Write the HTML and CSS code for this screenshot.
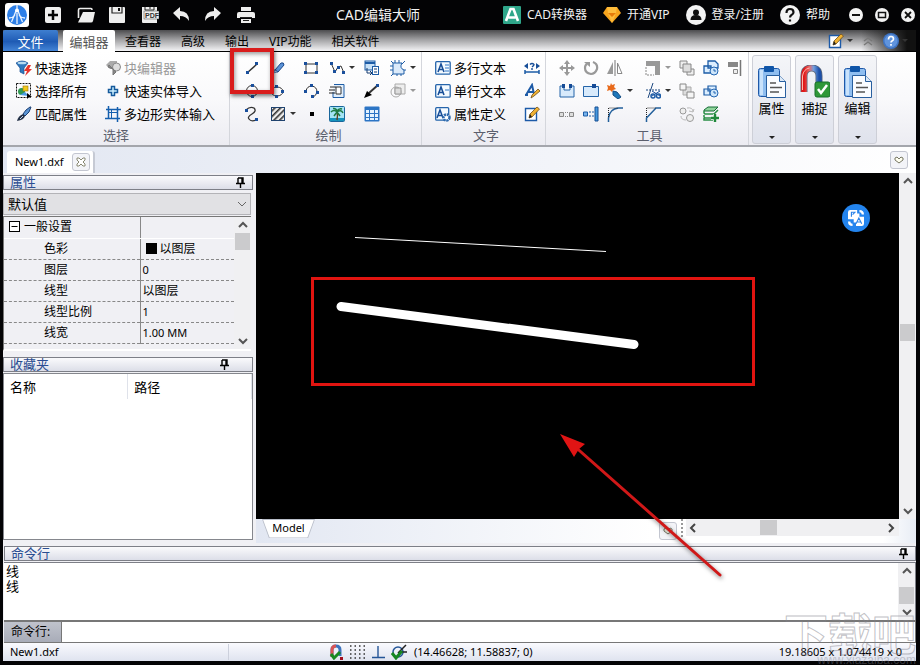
FILE: index.html
```html
<!DOCTYPE html>
<html lang="zh-CN">
<head>
<meta charset="utf-8">
<title>CAD编辑大师</title>
<link rel="stylesheet" href="styles.css">
</head>
<body>
<svg class="defs" aria-hidden="true">
  <defs>
    <linearGradient id="magnet" x1="0" x2="1"><stop offset="0" stop-color="#e01818"/><stop offset=".35" stop-color="#e86a6a"/><stop offset=".65" stop-color="#6f9fe0"/><stop offset="1" stop-color="#1d50a8"/></linearGradient>
    <pattern id="hatch" width="4" height="4" patternUnits="userSpaceOnUse" patternTransform="rotate(45)"><rect width="4" height="4" fill="#eee"/><rect width="1.6" height="4" fill="#333"/></pattern>
  </defs>
  <symbol id="pin" viewBox="0 0 9 11"><path d="M2 1h5v5M2 1v5M6 1v5M0 6.500h9M4.500 7v4" fill="none" stroke="#000" stroke-width="1.400"/></symbol>
  <symbol id="up" viewBox="0 0 10 8"><path d="M1 6l4-4 4 4" fill="none" stroke="#555" stroke-width="2"/></symbol>
  <symbol id="down" viewBox="0 0 10 8"><path d="M1 2l4 4 4-4" fill="none" stroke="#555" stroke-width="2"/></symbol>
  <symbol id="left" viewBox="0 0 8 10"><path d="M6 1L2 5l4 4" fill="none" stroke="#444" stroke-width="2"/></symbol>
  <symbol id="right" viewBox="0 0 8 10"><path d="M2 1l4 4-4 4" fill="none" stroke="#444" stroke-width="2"/></symbol>
  <symbol id="heart" viewBox="0 0 10 8"><path d="M1 2l2-1 2 2 2-2 2 1v2L5 7 1 4z" fill="#fffff0" stroke="#777764"/></symbol>
  <symbol id="clip" viewBox="0 0 30 34">
    <rect x="1.500" y="3.500" width="21" height="28" rx="2" fill="#8fbef0" stroke="#1e58a8"/>
    <rect x="3" y="5" width="3" height="25" fill="#c9e2fb"/>
    <rect x="7" y="1" width="10" height="6" rx="1" fill="#0f55a8"/>
    <path d="M9.500 10.500h13l6 6v16h-19z" fill="#fafcff" stroke="#285f9f"/>
    <path d="M22.500 10.500v6h6" fill="#dce9f7" stroke="#285f9f"/>
    <path d="M13 18h6M13 22.500h12M13 27h9" stroke="#555" stroke-width="1.500"/>
  </symbol>
  <symbol id="noteEdit" viewBox="0 0 16 16"><path d="M1.500 2.500h11v12h-11z" fill="#fff" stroke="#1c5aa8" stroke-width="1.400"/><path d="M5 12l1-4 7-7 2.500 2L8 11z" fill="#f0b234" stroke="#71501b" stroke-width=".8"/><path d="M5 12l3-1-2-3z" fill="#222"/></symbol>
</svg>

<header class="titlebar">
  <div class="quick">
    <svg class="logo" viewBox="0 0 24 24"><rect width="24" height="24" rx="3" fill="#fff"/><circle cx="12" cy="12" r="10" fill="#2d7fe8"/><path d="M12 2v4M12 10v11M6.500 19L11 8h2l4.500 11M4 15q4 0 6-3M20 15q-4 0-6-3" stroke="#e8f2ff" stroke-width="1.300" fill="none"/><circle cx="12" cy="7.500" r="2" fill="#fff"/></svg>
    <button aria-label="新建"><svg viewBox="0 0 16 16"><rect width="16" height="16" rx="2" fill="#f0f0f0"/><path d="M8 3v10M3 8h10" stroke="#050505" stroke-width="2.500"/></svg></button>
    <button aria-label="打开"><svg class="w18" viewBox="0 0 18 16"><path d="M1.500 11V3q0-1.500 1.500-1.500h11q1 0 1 1.500" fill="none" stroke="#eee" stroke-width="1.600"/><path d="M6 5h12l-2 9q-.4 1.500-2 1.500H1z" fill="#eee"/></svg></button>
    <button aria-label="保存"><svg viewBox="0 0 16 16"><path d="M1 0h14q1 0 1 1v14q0 1-1 1H1q-1 0-1-1V1q0-1 1-1z" fill="#eee"/><path d="M3 0v6h10V0" fill="none" stroke="#222" stroke-width="1.200"/><path d="M10 1v3" stroke="#111" stroke-width="2"/></svg></button>
    <button aria-label="保存为PDF"><svg class="w18" viewBox="0 0 18 16"><path d="M1 0h15v16H2q-1 0-1-1z" fill="#eee"/><path d="M4 0v3h9V0M9 0v2" stroke="#222" fill="none"/><rect x="3" y="4" width="15" height="8" fill="#eee" stroke="#444" stroke-width=".5"/><text x="4" y="11" font-size="7" font-weight="700" font-family="Liberation Sans, sans-serif" fill="#333">PDF</text></svg></button>
    <button aria-label="撤销"><svg viewBox="0 0 16 16"><path d="M0 6l7-6v4q9 0 9 10-3-5-9-5v4z" fill="#eee"/></svg></button>
    <button aria-label="重做"><svg viewBox="0 0 16 16"><path d="M16 6L9 0v4Q0 4 0 14q3-5 9-5v4z" fill="#eee"/></svg></button>
    <button aria-label="打印"><svg class="w18" viewBox="0 0 18 16"><path d="M4 0h10v4H4zM2 5h14q2 0 2 2v4H0V7q0-2 2-2zM4 12h10v4H4z" fill="#eee"/><path d="M3 10.500h12M6 13.500h6" stroke="#222" fill="none"/></svg></button>
  </div>
  <h1>CAD编辑大师</h1>
  <nav class="account">
    <a href="#"><svg viewBox="0 0 18 18"><rect width="18" height="18" rx="1" fill="#2fa68a"/><path d="M3 15L7.500 3h3L15 15M5.500 11.500h7" stroke="#fff" stroke-width="2.600" fill="none"/></svg>CAD转换器</a>
    <a href="#"><svg viewBox="0 0 18 18"><path d="M4 1h10l4 6-9 10L0 7z" fill="#f8a51d"/><path d="M4 1l1 6h8l1-6M5 7l4 10 4-10" fill="#ffbd3c"/><path d="M5 7h8l-4 4z" fill="#e77b0a"/></svg>开通VIP</a>
    <a href="#"><svg class="w20" viewBox="0 0 20 20"><circle cx="10" cy="10" r="10" fill="#f3f3f3"/><circle cx="10" cy="7.500" r="3" fill="#111"/><path d="M4.500 15q0-5 5.500-5t5.500 5z" fill="#111"/></svg>登录/注册</a>
    <a href="#"><svg class="w20" viewBox="0 0 20 20"><circle cx="10" cy="10" r="10" fill="#f3f3f3"/><path d="M6.500 8q0-4 3.500-4t3.500 3.200q0 1.800-2 2.800-1.500.8-1.500 2.500M10 14.500v2" fill="none" stroke="#111" stroke-width="2.200"/></svg>帮助</a>
  </nav>
  <div class="winbtns">
    <button aria-label="最小化"><svg viewBox="0 0 14 14"><circle cx="7" cy="7" r="7" fill="#f3f3f3"/><path d="M3 7h8" stroke="#111" stroke-width="2"/></svg></button>
    <button aria-label="最大化"><svg viewBox="0 0 14 14"><circle cx="7" cy="7" r="7" fill="#f3f3f3"/><rect x="3.500" y="4.500" width="7" height="5" fill="none" stroke="#111" stroke-width="1.500"/></svg></button>
    <button aria-label="关闭"><svg viewBox="0 0 14 14"><circle cx="7" cy="7" r="7" fill="#f3f3f3"/><path d="M4 4l6 6M10 4l-6 6" stroke="#111" stroke-width="1.800"/></svg></button>
  </div>
</header>

<div class="window">
  <nav class="tabs">
    <button class="file">文件</button>
    <button class="active">编辑器</button>
    <button>查看器</button>
    <button>高级</button>
    <button>输出</button>
    <button>VIP功能</button>
    <button>相关软件</button>
    <div class="tabtools">
      <button class="drop" aria-label="样式"><svg viewBox="0 0 16 16"><use href="#noteEdit"/></svg></button>
      <button aria-label="折叠"><svg class="s10" viewBox="0 0 10 10"><path d="M1 5l4-3 4 3M1 9l4-3 4 3" fill="none" stroke="#777" stroke-width="1.400"/></svg></button>
      <button class="drop" aria-label="帮助"><svg viewBox="0 0 16 16"><circle cx="8" cy="8" r="8" fill="#3e74c4"/><circle cx="8" cy="8" r="6.500" fill="#6094dd"/><path d="M5.500 6.500q0-3 2.500-3t2.500 2.400q0 1.300-1.500 2-1 .6-1 1.600M8 11v1.800" fill="none" stroke="#fff" stroke-width="1.700"/></svg></button>
    </div>
  </nav>

  <div class="ribbon">
    <section class="group select-group">
      <div class="tools">
        <button><svg viewBox="0 0 16 16"><path d="M0 3q6-4 12 0L8 8v6l-4-2V8z" fill="#2f78be" stroke="#174e91" stroke-width=".7"/><ellipse cx="6" cy="3" rx="4.500" ry="1.300" fill="#b6daf2"/><path d="M12 5l-4 6h3l-2 5 7-7h-3l2-4z" fill="#e5322c"/></svg>快速选择</button>
        <button disabled><svg viewBox="0 0 16 16"><path d="M1 5l4-4h7v8H5z" fill="#aaa"/><circle cx="11.500" cy="7" r="4" fill="#ddd" stroke="#888"/><path d="M4 5l7 7-3 3V9L3 7z" fill="#888" stroke="#777"/></svg>块编辑器</button>
        <button><svg viewBox="0 0 16 16"><rect x=".5" y=".5" width="14" height="14" fill="none" stroke="#111" stroke-dasharray="2 1"/><circle cx="5.500" cy="8.500" r="3.500" fill="#2f9850"/><rect x="7" y="3" width="5" height="5" fill="#f2c81d" stroke="#987600" stroke-width=".6"/><path d="M4 12l5-3 4 4z" fill="#4b9be4"/><path d="M11 10v6l2-2h3z"/></svg>选择所有</button>
        <button><svg viewBox="0 0 16 16"><path d="M6.500 3.500h3v3h3v3h-3v3h-3v-3h-3v-3h3z" fill="#cdf1ff" stroke="#155a9c" stroke-width="1.500"/></svg>快速实体导入</button>
        <button><svg viewBox="0 0 16 16"><path d="M14 1l-4 3-3 4 2 2 4-4 2-5z" fill="#5b94d4" stroke="#1b3e72"/><path d="M7 8l2 2q-1 4-8 5 1-5 6-7z" fill="#233047"/><path d="M7 10l-3 3" stroke="#c4d3e8"/></svg>匹配属性</button>
        <button><svg viewBox="0 0 16 16"><path d="M3.500 0v13M12.500 1v15M1 3.500h15M0 12.500h15" stroke="#155fae" stroke-width="1.500"/><path d="M6.500 3v10M3 6.500h10" stroke="#155fae"/></svg>多边形实体输入</button>
      </div>
      <h2>选择</h2>
    </section>

    <section class="group draw-group">
      <div class="tools">
        <button class="marked" aria-label="线"><svg viewBox="0 0 16 16"><path d="M3 13L13 4" stroke="#333" stroke-width="1.500"/><path d="M2 11h3v3H2zM11 2h3v3h-3z" fill="#1a4f9c"/></svg></button>
        <button aria-label="铅笔"><svg viewBox="0 0 16 16"><path d="M0 10h5" stroke="#555"/><path d="M5 10l6-7q3-1 3 2l-6 7z" fill="#5c94d8" stroke="#1c498b"/><path d="M3 13l2-3 3 2z" fill="#a5c6ec" stroke="#1c498b" stroke-width=".6"/></svg></button>
        <button aria-label="矩形"><svg viewBox="0 0 16 16"><rect x="3" y="4" width="11" height="9" fill="none" stroke="#333"/><path d="M1 2h3v3H1zM12 2h3v3h-3zM1 11h3v3H1zM12 11h3v3h-3z" fill="#1a4f9c"/></svg></button>
        <button class="drop" aria-label="多段线"><svg viewBox="0 0 16 16"><path d="M2 3l4 9 3-5 3-1 3 7" fill="none" stroke="#333"/><path d="M1 2h3v3H1zM4 10h3v3H4zM8 6h3v3H8zM13 11h3v3h-3z" fill="#1a4f9c"/></svg></button>
        <button aria-label="插入块"><svg viewBox="0 0 16 16"><rect x="1" y="1" width="10" height="9" fill="#c8e1f7" stroke="#1d5ca6"/><path d="M1 3h10" stroke="#1d5ca6" stroke-width="2"/><rect x="8.500" y="6.500" width="6" height="8" fill="#fff" stroke="#1d5ca6"/><path d="M10 9h3M10 12h3M3 8v5h5M6 11l2 2-2 2" fill="none" stroke="#173d70"/></svg></button>
        <button class="drop" aria-label="云线"><svg viewBox="0 0 16 16"><path d="M3 3h9q-3 5 2 7v4H3z" fill="#dbeafa" stroke="#1d5ca6"/><path d="M1 1l2 2M5 0v3M9 0v3M15 1l-3 3M0 6h3M0 10h3M1 16l2-2M7 14v2M11 14v2M14 10h2" stroke="#1d5ca6"/></svg></button>

        <button aria-label="圆"><svg viewBox="0 0 16 16"><circle cx="8" cy="8" r="5.500" fill="none" stroke="#333"/><path d="M7 1h3v3H7zM1 7h3v3H1zM12 7h3v3h-3zM7 12h3v3H7zM7 7h2v2H7z" fill="#1a4f9c"/></svg></button>
        <button aria-label="椭圆"><svg viewBox="0 0 16 16"><ellipse cx="7" cy="8.500" rx="6" ry="4.500" fill="none" stroke="#333"/><path d="M5 2h3v3H5zM11 7h3v3h-3zM5 12h3v3H5z" fill="#1a4f9c"/></svg></button>
        <button aria-label="圆弧"><svg viewBox="0 0 16 16"><path d="M3 8q1-5 6-5 5 1 5 6-1 4-4 5" fill="none" stroke="#333"/><path d="M1 7h3v3H1zM7 1h3v3H7zM13 8h3v3h-3zM8 12h3v3H8z" fill="#1a4f9c"/></svg></button>
        <button aria-label="外部参照"><svg viewBox="0 0 16 16"><path d="M5 1.500h10v13H4V9" fill="#e1eefb" stroke="#1d5ca6"/><path d="M7 4h5v7H7z" fill="#fff" stroke="#333"/><path d="M1 4h6M0 7h6M0 10h6" stroke="#222"/></svg></button>
        <button aria-label="引线"><svg viewBox="0 0 16 16"><path d="M14 2L5 10" stroke="#333" stroke-width="2"/><path d="M0 15l3-7 5 4z"/><path d="M12 1h3v3h-3z" fill="#1a4f9c"/></svg></button>
        <button class="drop" disabled aria-label="区域"><svg viewBox="0 0 16 16"><path d="M5 1h10v10H5z" fill="#eee" stroke="#aaa"/><circle cx="6" cy="9" r="5" fill="none" stroke="#aaa"/><path d="M5 5h6v6H5z" fill="#ddd" stroke="#999"/></svg></button>

        <button aria-label="样条线"><svg viewBox="0 0 16 16"><path d="M2 4q4-4 8-2 3 3-2 6-5 3-3 5 2 3 7 1" fill="none" stroke="#333" stroke-width="1.300"/><path d="M1 3h3v3H1zM11 12h3v3h-3z" fill="#1a4f9c"/></svg></button>
        <button class="drop" aria-label="填充"><svg viewBox="0 0 16 16"><rect x="1.500" y="1.500" width="13" height="13" fill="url(#hatch)" stroke="#1f426e"/></svg></button>
        <button aria-label="点"><svg viewBox="0 0 16 16"><path d="M7 6h4v4H7z"/></svg></button>
        <button aria-label="图像"><svg viewBox="0 0 16 16"><rect x=".5" y=".5" width="15" height="15" rx="1" fill="#a5e4f5" stroke="#19669b"/><path d="M1 12h14v3H1z" fill="#1693bd"/><path d="M8 14q1-5 0-8" stroke="#604020" stroke-width="1.500" fill="none"/><path d="M8 6Q5 3 2 6M8 6q4-3 6 1M8 5Q7 2 4 2.500M8 5q2-3 5-2M8 6L5 10M8 6l3 4" fill="none" stroke="#1e7942" stroke-width="1.500"/></svg></button>
        <button aria-label="表格"><svg viewBox="0 0 16 16"><rect x=".5" y=".5" width="15" height="15" rx="1" fill="#2c75c5"/><path d="M2 4h3v3H2zM6 4h4v3H6zM11 4h3v3h-3zM2 8h3v3H2zM6 8h4v3H6zM11 8h3v3h-3zM2 12h3v2H2zM6 12h4v2H6zM11 12h3v2h-3z" fill="#e4f3ff"/></svg></button>
      </div>
      <h2>绘制</h2>
    </section>

    <section class="group text-group">
      <div class="tools">
        <button><svg viewBox="0 0 16 16"><rect x=".7" y="1.700" width="14.500" height="12.500" rx="1" fill="#f4faff" stroke="#2564ab" stroke-width="1.300"/><path d="M3 12L6 4l3 8M4 9.500h4" fill="none" stroke="#174e98" stroke-width="1.600"/><path d="M10 5h4M10 8h4M10 11h4" stroke="#2c74c5"/></svg>多行文本</button>
        <button aria-label="标注"><svg viewBox="0 0 16 16"><path d="M1 10v4M15 10v4M1 12h14" stroke="#1d5ca6" stroke-width="1.500"/><path d="M0 6l4-3v6zM16 6l-4-3v6z" fill="#174e98"/><path d="M6 4.500q2-2 4 0 0 1-2 2.500M8 8v2" fill="none" stroke="#174e98" stroke-width="1.400"/></svg></button>
        <button><svg viewBox="0 0 16 16"><rect x=".7" y="1.700" width="14.500" height="12.500" rx="1" fill="#f4faff" stroke="#2564ab" stroke-width="1.300"/><path d="M3 12L6 4l3 8M4 9.500h4" fill="none" stroke="#174e98" stroke-width="1.600"/><path d="M10 7h4" stroke="#2c74c5"/></svg>单行文本</button>
        <button aria-label="文字样式"><svg viewBox="0 0 16 16"><path d="M1 12h3M2 12L8 2l2 9M4 9h5" fill="none" stroke="#1e5ba7" stroke-width="2"/><path d="M7 15l1-3 6-6 2 2-6 5z" fill="#f0b234" stroke="#71501b" stroke-width=".8"/></svg></button>
        <button><svg viewBox="0 0 16 16"><rect x=".7" y="1.700" width="13" height="12.500" rx="1" fill="#f4faff" stroke="#2564ab" stroke-width="1.300"/><path d="M2 12L5 4l3 8M3 9.500h4" fill="none" stroke="#174e98" stroke-width="1.500"/><circle cx="11.500" cy="11.500" r="3" fill="#fff" stroke="#2c69ae" stroke-width="2.500" stroke-dasharray="2 .8"/></svg>属性定义</button>
        <button aria-label="编辑文字"><svg viewBox="0 0 16 16"><use href="#noteEdit"/></svg></button>
      </div>
      <h2>文字</h2>
    </section>

    <section class="group tool-group">
      <div class="tools">
        <button disabled aria-label="移动"><svg viewBox="0 0 16 16"><path d="M8 2v12M2 8h12" stroke="#999" stroke-width="2"/><path d="M8 0l3 4H5zM8 16l3-4H5zM0 8l4-3v6zM16 8l-4-3v6z" fill="#999"/></svg></button>
        <button disabled aria-label="旋转"><svg viewBox="0 0 16 16"><path d="M10 2q5 2 4 7-2 5-6 5-6-1-6-6 0-3 2-4" fill="none" stroke="#999" stroke-width="2.200"/><path d="M1 2h6v5z" fill="#999"/></svg></button>
        <button disabled aria-label="镜像"><svg viewBox="0 0 16 16"><path d="M6 2v12H0z" fill="#999"/><path d="M8 0v16" stroke="#777"/><path d="M10.500 3v10.500H15z" fill="#fff" stroke="#888"/></svg></button>
        <button disabled class="drop" aria-label="缩放"><svg viewBox="0 0 16 16"><path d="M1 1h14v14h-5V6H1z" fill="#999"/><path d="M1 7v8h8" fill="none" stroke="#888" stroke-dasharray="2 1"/></svg></button>
        <button disabled aria-label="前置"><svg viewBox="0 0 16 16"><path d="M1 1h7v7H1zM8 9h7v6H8z" fill="#eee" stroke="#888"/><path d="M4 4h8v8H4z" fill="#ddd" stroke="#888"/></svg></button>
        <button aria-label="组合"><svg viewBox="0 0 16 16"><path d="M5 1h7l3 3v4H5zM1 6h7v7H1z" fill="#dceeff" stroke="#1d5ca6" stroke-width="1.300"/><circle cx="11" cy="11" r="4" fill="#cde5fa" stroke="#2466b2"/><path d="M11 9v2h2" stroke="#2466b2" fill="none"/></svg></button>
        <button disabled aria-label="对齐"><svg viewBox="0 0 16 16"><path d="M1 2h10v5H1z" fill="#888"/><path d="M6.500 9.500h4v4h-4z" fill="#eee" stroke="#888"/><path d="M13.500 0v16" stroke="#777" stroke-width="1.500"/></svg></button>

        <button aria-label="打断"><svg viewBox="0 0 16 16"><path d="M1 3h4v4h6V3h4v11H1z" fill="#d8eafb" stroke="#2564a8"/><path d="M3 1h3v4H3zM10 1h3v4h-3z" fill="#164b96"/></svg></button>
        <button aria-label="闭合"><svg viewBox="0 0 16 16"><path d="M.5 3.500h15v10H.5z" fill="#d8eafb" stroke="#2564a8"/><path d="M9 1h4v4H9z" fill="#164b96"/></svg></button>
        <button class="drop" aria-label="分解"><svg viewBox="0 0 16 16"><path d="M4 0l1 2 3-1-1 3 2 2-3 1-1 2-2-2-3 1 1-3-1-3 3 1z" fill="#e86a1b"/><path d="M6 8l4 1 4 5-3 2-5-4z" fill="#1e77b9" stroke="#154c83"/></svg></button>
        <button class="drop" aria-label="修剪"><svg viewBox="0 0 16 16"><path d="M8 0L3 15" stroke="#1b477f"/><path d="M1 7h14" stroke="#1b477f" stroke-dasharray="2 1"/><path d="M7 8l8 5M7 13l8-5" stroke="#174f9c"/><circle cx="8" cy="13" r="2" fill="none" stroke="#1d5ca6" stroke-width="1.500"/><circle cx="13.500" cy="13" r="2" fill="none" stroke="#1d5ca6" stroke-width="1.500"/></svg></button>
        <button disabled aria-label="后置"><svg viewBox="0 0 16 16"><path d="M4 4h8v8H4z" fill="#ddd" stroke="#aaa"/><path d="M1 1h6v6H1zM8 9h7v6H8z" fill="#f5f5f5" stroke="#888"/></svg></button>
        <button aria-label="取消组合"><svg viewBox="0 0 16 16"><path d="M5 3h8v5H5zM1 6h6v6H1z" fill="#dceeff" stroke="#1d5ca6" stroke-width="1.200"/><circle cx="11" cy="10" r="4" fill="#cde5fa" stroke="#2466b2"/><path d="M11 8v2h2" stroke="#2466b2" fill="none"/></svg></button>
        <span></span>

        <button disabled aria-label="阵列"><svg viewBox="0 0 16 16"><path d="M.5 6.500h4v4h-4zM10.500 6.500h4v4h-4z" fill="#ddd" stroke="#888"/><path d="M6 6.500h4M6 10.500h4" stroke="#888" stroke-dasharray="1 1"/></svg></button>
        <button aria-label="延伸"><svg viewBox="0 0 16 16"><path d="M.5 6h4v4h-4z" fill="#77b3ed" stroke="#1d5ca6"/><path d="M6 6h5M6 10h5" stroke="#1d5ca6" stroke-dasharray="2 1"/><path d="M12 1h3v14h-3z" fill="#4598df" stroke="#174f93"/></svg></button>
        <button aria-label="圆角"><svg viewBox="0 0 16 16"><path d="M1.500 16v-4q1-9 10-10H16" fill="none" stroke="#225f9b" stroke-width="1.500"/><path d="M1.500 11V2H11" fill="none" stroke="#222" stroke-dasharray="1 1"/></svg></button>
        <button aria-label="倒角"><svg viewBox="0 0 16 16"><path d="M1.500 16v-4L11 2h5" fill="none" stroke="#225f9b" stroke-width="1.500"/><path d="M1.500 11V2H11" fill="none" stroke="#222" stroke-dasharray="1 1"/></svg></button>
        <button disabled aria-label="替换"><svg viewBox="0 0 16 16"><circle cx="4" cy="5" r="3" fill="#eee" stroke="#999"/><circle cx="11" cy="12" r="3.500" fill="#eee" stroke="#999"/><path d="M8 2q6-1 6 4M10 5l4 1 1-3M2 10q0 4 5 4" fill="none" stroke="#bbb"/></svg></button>
        <button aria-label="添加图层"><svg viewBox="0 0 16 16"><path d="M1 4l4-3h10l-4 4H1z" fill="#8fd49b" stroke="#176c37"/><path d="M1 5v2l1 1h9l4-4M1 9v2l1 1h9M1 12v2h10" fill="none" stroke="#2b8e47" stroke-width="1.500"/><path d="M12 8v8M8 12h8" stroke="#fff" stroke-width="4"/><path d="M12 8v8M8 12h8" stroke="#20883c" stroke-width="2.500"/></svg></button>
      </div>
      <h2>工具</h2>
    </section>

    <div class="large">
      <button><svg viewBox="0 0 30 34"><use href="#clip"/></svg>属性</button>
      <button><svg viewBox="0 0 30 34"><path d="M4 27V11q0-8 7.500-8T19 11v8" fill="none" stroke="#5b6679" stroke-width="7"/><path d="M4 27V11q0-8 7.500-8T19 11v8" fill="none" stroke="url(#magnet)" stroke-width="5.500"/><path d="M2.500 25V11q1-7 7-8" fill="none" stroke="#ffb8ac" stroke-width="1"/><rect x="15" y="17" width="15" height="15" rx="2" fill="#2f9838" stroke="#16702a"/><path d="M18 24l3 4 6-8" fill="none" stroke="#fff" stroke-width="2.500"/></svg>捕捉</button>
      <button><svg viewBox="0 0 30 34"><use href="#clip"/></svg>编辑</button>
    </div>
  </div>

  <div class="doctabs">
    <div class="doctab">New1.dxf<button class="chip" aria-label="关闭文件"><svg class="s10" viewBox="0 0 10 10"><path d="M1 1h2l2 2 2-2h2v2L7 5l2 2v2H7L5 7 3 9H1V7l2-2-2-2z" fill="#fff" stroke="#888872"/></svg></button></div>
    <button class="chip" aria-label="文件列表"><svg class="s10" viewBox="0 0 10 8"><use href="#heart"/></svg></button>
  </div>

  <main class="work">
    <aside class="side">
      <h3 class="panelhead">属性<svg viewBox="0 0 9 11"><use href="#pin"/></svg></h3>
      <div class="selectwrap">
        <select aria-label="对象"><option>默认值</option></select>
        <svg viewBox="0 0 10 8"><path d="M1 2l4 4 4-4" fill="none" stroke="#666"/></svg>
      </div>
      <div class="props">
        <table>
          <tbody>
            <tr class="cat"><th><svg viewBox="0 0 11 11"><rect x=".5" y=".5" width="10" height="10" fill="#fff" stroke="#000"/><path d="M2.500 5.500h6" stroke="#000"/></svg>一般设置</th><td></td></tr>
            <tr><th>色彩</th><td class="color"><i></i>以图层</td></tr>
            <tr><th>图层</th><td>0</td></tr>
            <tr><th>线型</th><td>以图层</td></tr>
            <tr><th>线型比例</th><td>1</td></tr>
            <tr><th>线宽</th><td>1.00 MM</td></tr>
          </tbody>
        </table>
        <div class="vscroll"><svg viewBox="0 0 10 8"><use href="#up"/></svg><i></i><b></b><svg viewBox="0 0 10 8"><use href="#down"/></svg></div>
      </div>
      <h3 class="panelhead fav">收藏夹<svg viewBox="0 0 9 11"><use href="#pin"/></svg></h3>
      <div class="favlist">
        <table><thead><tr><th>名称</th><th>路径</th></tr></thead></table>
      </div>
    </aside>

    <div class="view">
      <div class="canvas">
        <svg class="drawing" width="643" height="346" viewBox="0 0 643 346">
          <path d="M99 64.500L350 78.500" stroke="#fff"/>
          <path d="M85 133.500L378 171.500" stroke="#fff" stroke-width="9" stroke-linecap="round"/>
          <rect x="56.500" y="105.500" width="441" height="106" fill="none" stroke="#e01410" stroke-width="3"/>
          <g class="arrow"><path d="M316 271L464 402" stroke="#d01818" stroke-width="3" stroke-linecap="round"/><path d="M304 261l25 10-6 5-5 8z" fill="#e01414"/></g>
        </svg>
        <button class="translate" aria-label="翻译"><svg viewBox="0 0 14 14"><path d="M2 0h6v3h2v3h4v6q0 2-2 2H7v-3H5V8H0V2q0-2 2-2zM10 0q4 0 4 4h-2q0-2-2-2zM0 10q0 4 4 4v-2q-2 0-2-2z" fill="#fff"/><path d="M3 6V2h3L4 4M7 12l2.500-5L12 12M8 10.500h3" stroke="#2c83e8" fill="none"/></svg></button>
      </div>
      <div class="vscroll right"><svg viewBox="0 0 10 8"><use href="#up"/></svg><b></b><i></i><b class="more"></b><svg viewBox="0 0 10 8"><use href="#down"/></svg></div>
      <div class="viewfoot">
        <button class="model"><span>Model</span></button>
        <button class="chip footchip" aria-label="布局列表"><svg class="s10" viewBox="0 0 10 8"><use href="#heart"/></svg></button>
        <span class="grip"></span>
        <div class="hscroll"><svg viewBox="0 0 8 10"><use href="#left"/></svg><i></i><svg viewBox="0 0 8 10"><use href="#right"/></svg></div>
      </div>
    </div>
  </main>

  <section class="command">
    <h3 class="panelhead">命令行<svg viewBox="0 0 9 11"><use href="#pin"/></svg></h3>
    <div class="log">
      <p>线<br>线</p>
      <div class="vscroll"><svg viewBox="0 0 10 8"><use href="#up"/></svg><b></b><i></i><svg viewBox="0 0 10 8"><use href="#down"/></svg></div>
    </div>
    <div class="prompt"><label for="cmd">命令行:</label><input id="cmd" type="text"></div>
  </section>

  <footer class="status">
    <span class="name">New1.dxf</span>
    <div class="modes">
      <button aria-label="捕捉"><svg viewBox="0 0 16 16"><path d="M4 13V6q0-4 4-4t4 4v6" fill="none" stroke="#3d73bd" stroke-width="3"/><path d="M4 13V6q0-4 4-4" fill="none" stroke="#d95555" stroke-width="3"/><path d="M3 10l3 4 6-6" fill="none" stroke="#178a22" stroke-width="3"/><path d="M12 13h3v3h-3z" fill="#a01020"/></svg></button>
      <button aria-label="栅格"><svg viewBox="0 0 16 16"><path d="M1 2h15M1 6h15M1 10h15M1 14h15" stroke="#333" stroke-width="1.500" stroke-dasharray="1.500 3"/></svg></button>
      <button aria-label="正交"><svg viewBox="0 0 16 16"><path d="M8 2v11M2 13.500h13" stroke="#245597" stroke-width="1.400"/></svg></button>
      <button aria-label="追踪"><svg viewBox="0 0 16 16"><circle cx="7" cy="8" r="5" fill="none" stroke="#245597" stroke-width="1.500"/><path d="M15 1L7 9M8 8h8" stroke="#222" stroke-width="1.500"/><path d="M1 9l4 5 6-7" fill="none" stroke="#158622" stroke-width="3"/></svg></button>
      <span>(14.46628; 11.58837; 0)</span>
    </div>
    <span class="size">19.18605 x 1.074419 x 0</span>
  </footer>
</div>
<div class="watermark" aria-hidden="true"><strong>下载吧</strong><small>www.xiazaiba.com</small></div>
</body>
</html>
```
FILE: styles.css
```css
* { box-sizing: border-box; }
html, body { height: 100%; }
body {
  margin: 0;
  display: flex;
  flex-direction: column;
  position: relative;
  overflow: hidden;
  background: #030305;
  color: #000;
  font: 12px/16px "Noto Sans", "Noto Sans CJK SC", sans-serif;
}
h1, h2, h3, p { margin: 0; font-weight: 400; }
button { margin: 0; padding: 0; border: 0; background: none; font: inherit; color: inherit; }
svg { display: block; flex: none; width: 16px; height: 16px; }
.defs { position: absolute; width: 0; height: 0; }
svg.w18 { width: 18px; }
svg.w20 { width: 20px; height: 20px; }
svg.s10 { width: 10px; height: 10px; }

/* title bar */
.titlebar {
  display: flex;
  align-items: center;
  flex: none;
  height: 30px;
  padding: 0 5px;
  color: #f2f2f2;
}
.quick { display: flex; align-items: center; gap: 16px; width: 331px; }
.quick .logo { width: 24px; height: 24px; }
.quick button { width: 16px; }
.titlebar h1 { font-size: 14px; line-height: 20px; flex: 1; }
.account { display: flex; align-items: center; gap: 16px; }
.account a { display: flex; align-items: center; gap: 6px; color: inherit; text-decoration: none; }
.account svg { width: 18px; height: 18px; }
.account svg.w20 { width: 20px; height: 20px; }
.winbtns { display: flex; gap: 12px; margin-left: 19px; }
.winbtns svg { width: 14px; height: 14px; }

.window {
  flex: 1;
  min-height: 0;
  display: flex;
  flex-direction: column;
  margin: 0 4px 4px 3px;
  background: #f0f0f4;
}

/* ribbon tabs */
.tabs {
  display: flex;
  flex: none;
  height: 22px;
  border-bottom: 1px solid #000;
  background: linear-gradient(90deg, transparent 94%, #111 99%), linear-gradient(#4c4c4e, #a8a8aa 50%, #f4f4f6);
}
.tabs > button { padding: 2px 10px 0; }
.tabs > .file { width: 55px; margin-right: 5px; font-size: 13px; color: #fff; background: linear-gradient(#3f7fd0, #1f5bb4 55%, #4384d6); border-radius: 2px 2px 0 0; }
.tabs > .active { width: 52px; padding: 2px 0 0; font-size: 13px; background: #fff; color: #555; border-radius: 2px 2px 0 0; margin-bottom: -1px; }
.tabtools { display: flex; align-items: center; gap: 10px; margin-left: auto; padding-right: 8px; }
.drop { display: flex; align-items: center; gap: 4px; }
.drop::after { content: ""; border: 3px solid transparent; border-top-color: #333; border-bottom: 0; }
.drop:disabled::after { border-top-color: #999; }
.tabtools .drop { gap: 3px; }

/* ribbon */
.ribbon {
  display: flex;
  flex: none;
  height: 95px;
  border-bottom: 2px solid #a4a6ac;
  background: linear-gradient(#fff, #f9f9fb 50%, #ececf2);
}
.group { display: flex; flex-direction: column; border-right: 1px solid #d4d6dc; padding: 4px 0 0 13px; }
.group h2 { font-size: 13px; line-height: 20px; text-align: center; color: #5b5f6d; margin-left: -13px; }
.tools { display: grid; grid-auto-rows: 23px; align-items: center; justify-items: start; }
.tools button { white-space: nowrap; }
.select-group, .text-group { font-size: 13px; }
.select-group button, .text-group button { display: flex; align-items: center; gap: 3px; }
.select-group button:disabled { color: #999; }
.select-group { width: 227px; }
.select-group .tools { grid-template-columns: 89px 1fr; }
.draw-group { width: 192px; padding-left: 14px; }
.draw-group .tools { grid-template-columns: 26px 33px 26px 35px 26px 1fr; }
.draw-group h2, .tool-group h2 { margin-left: -8px; }
.text-group { width: 124px; }
.text-group .tools { grid-template-columns: 89px 1fr; }
.text-group h2 { margin-left: -8px; }
.tool-group { width: 203px; }
.tool-group .tools { grid-template-columns: 24px 24px 38px 34px 24px 24px 1fr; }
.marked { position: relative; }
.marked::after {
  content: "";
  position: absolute;
  z-index: 2;
  left: -14px;
  top: -12px;
  width: 36px;
  height: 38px;
  border: 4px solid #d91c1c;
  box-shadow: 1px 2px 4px rgba(0, 0, 0, .55), inset 1px 2px 4px rgba(0, 0, 0, .4);
}
.large { display: flex; gap: 4px; padding: 3px 0 1px 3px; }
.large button {
  display: flex;
  flex-direction: column;
  align-items: center;
  width: 39px;
  padding: 9px 0 4px;
  border: 1px solid #cdcfd7;
  border-radius: 3px;
  background: linear-gradient(#f4f5f8, #dfe2ec);
  font-size: 13px;
  line-height: 18px;
}
.large svg { width: 30px; height: 34px; }
.large button::after { content: ""; margin-top: auto; border: 3px solid transparent; border-top-color: #222; border-bottom: 0; }

/* document tabs */
.doctabs {
  display: flex;
  flex: none;
  justify-content: space-between;
  align-items: flex-start;
  height: 26px;
  padding: 4px 8px 0 4px;
  background: linear-gradient(90deg, #e2e7f2, #f2f4f9 60%, #fff);
}
.doctab {
  display: flex;
  align-items: center;
  gap: 8px;
  height: 22px;
  padding: 0 3px 0 8px;
  background: #fff;
  border-right: 2px solid #c6cad4;
  border-radius: 3px 3px 0 0;
  font-size: 11px;
}
.chip {
  display: grid;
  place-items: center;
  width: 18px;
  height: 18px;
  border: 1px solid #c3c6d0;
  border-radius: 3px;
  background: #f3f4f8;
}

/* work area */
.work { flex: 1; min-height: 0; display: flex; gap: 3px; }
.side { display: flex; flex-direction: column; width: 250px; padding-top: 2px; }
.panelhead {
  display: flex;
  align-items: center;
  justify-content: space-between;
  flex: none;
  height: 15px;
  padding: 0 7px 0 6px;
  border: 1px solid #7d7f87;
  background: linear-gradient(#fafafc, #dcdee8);
  color: #2a4d91;
  font-size: 13px;
  line-height: 13px;
}
.panelhead svg { width: 9px; height: 11px; }
.panelhead.fav { margin-top: 6px; padding-right: 23px; }
.selectwrap { position: relative; margin: 3px 2px 0 0; }
.selectwrap select {
  display: block;
  width: 100%;
  height: 22px;
  padding: 0 4px;
  appearance: none;
  border: 1px solid #b3b3b7;
  border-radius: 0;
  background: #e1e1e4;
  color: #000;
  font: inherit;
  font-size: 13px;
}
.selectwrap svg { position: absolute; right: 4px; top: 7px; width: 10px; height: 8px; }
.props { display: flex; flex: none; height: 135px; margin: 1px 2px 0 0; border: 1px solid #777; border-width: 1px 0 0 1px; border-bottom: 2px solid #fff; }
.props table { flex: 1; border-collapse: collapse; table-layout: fixed; height: 127px; }
.props th, .props td { height: 21px; padding: 0; border-bottom: 1px dashed #888; text-align: left; font-weight: 400; font-size: 12px; line-height: 18px; }
.props th { width: 136px; padding-left: 40px; border-right: 1px solid #888; }
.props td { padding-left: 2px; font-size: 11px; }
.props .cat th { padding-left: 5px; }
.props .cat th, .props .cat td { border-bottom: 1px solid #fff; }
.props .cat svg { display: inline-block; width: 11px; height: 11px; margin-right: 4px; vertical-align: -1px; }
.props tr:nth-child(2) td, .props tr:nth-child(4) td { font-size: 12px; }
.props .color { padding-left: 5px; }
.color i { display: inline-block; width: 11px; height: 11px; margin-right: 3px; background: #000; vertical-align: -1px; }
.vscroll { display: flex; flex-direction: column; align-items: center; flex: none; width: 17px; padding: 4px 0; gap: 4px; background: #f0f0f2; }
.vscroll svg { width: 10px; height: 8px; }
.vscroll i { flex: none; width: 15px; height: 17px; background: #cbcbcd; }
.vscroll b { flex: 1; }
.favlist { flex: 1; min-height: 0; margin: 1px 0 3px; border: 1px solid #85878d; background: #fff; }
.favlist table { width: 100%; border-collapse: collapse; table-layout: fixed; }
.favlist th { height: 25px; padding: 0 6px; border-right: 1px solid #dfe2ea; text-align: left; font-weight: 400; font-size: 13px; }

.view { flex: 1; min-width: 0; display: grid; grid-template-columns: 1fr 17px; grid-template-rows: 1fr 24px; }
.canvas { position: relative; z-index: 2; min-height: 0; background: #000; }
.drawing { position: absolute; left: 0; top: 0; width: 643px; height: 346px; overflow: visible; pointer-events: none; }
.arrow { filter: drop-shadow(1px 2px 2px rgba(0, 0, 0, .5)); }
.translate {
  position: absolute;
  right: 29px;
  top: 31px;
  display: grid;
  place-items: center;
  width: 28px;
  height: 28px;
  border-radius: 50%;
  background: #2384ee;
}
.vscroll.right .more { flex: 1.2; }
.viewfoot { grid-column: 1 / 3; display: flex; align-items: flex-start; padding: 0 17px 0 6px; background: linear-gradient(90deg, #e2e7f2, #fff 60%, #fff 95%, #e8edf5); }
.model { width: 53px; height: 19px; padding: 0; background: #b8bdc8; clip-path: polygon(0 0, 100% 0, 87% 100%, 13% 100%); }
.model span { display: block; height: 18px; margin: 0 1px; background: #fff; clip-path: polygon(0 0, 100% 0, 87% 100%, 13% 100%); font-size: 11px; line-height: 16px; }
.footchip { margin: 3px 4px 0 auto; }
.grip { align-self: stretch; width: 5px; margin: 0 0 6px; border-left: 2px dotted #999; }
.hscroll { display: flex; align-items: center; justify-content: space-between; width: 213px; height: 17px; padding: 0 4px 0 3px; background: #f0f0f2; }
.hscroll svg { width: 8px; height: 10px; }
.hscroll i { width: 17px; height: 15px; margin-right: 48px; background: #cbcbcd; }

/* command line */
.command { flex: none; padding: 3px 0 0 1px; }
.log { display: flex; justify-content: space-between; height: 58px; margin-top: 1px; border: 1px solid #7d7f87; border-width: 1px 1px 0 0; background: #fff; }
.log p { padding: 1px 2px; font-size: 13px; line-height: 15px; }
.prompt { display: flex; height: 23px; border: 1px solid #777; border-top-width: 2px; border-left: 0; }
.prompt label { width: 58px; padding: 1px 0 0 7px; border-right: 1px solid #777; background: linear-gradient(#c0c3cc, #a8acb8); line-height: 18px; }
.prompt input { flex: 1; min-width: 0; border: 0; padding: 0 4px; background: #fff; }

/* status bar */
.status { display: flex; flex: none; align-items: center; height: 18px; background: linear-gradient(#fafafe, #dfe3ef); font-size: 11px; }
.name { width: 226px; padding-left: 7px; border-right: 1px solid #ccd0dc; }
.modes { display: flex; align-items: center; gap: 5px; margin-left: 99px; }
.modes span { margin-left: 2px; }
.size { margin-left: auto; padding-right: 14px; }

.watermark {
  position: absolute;
  right: 4px;
  bottom: 0;
  display: flex;
  flex-direction: column;
  align-items: flex-end;
  color: transparent;
  -webkit-text-stroke: 1px rgba(130, 130, 140, .5);
  pointer-events: none;
}
.watermark strong { font: 700 44px/46px "Noto Sans CJK SC", sans-serif; }
.watermark small { font: 12px/10px "Liberation Sans", sans-serif; -webkit-text-stroke: 0; color: rgba(130, 130, 140, .4); }
```
